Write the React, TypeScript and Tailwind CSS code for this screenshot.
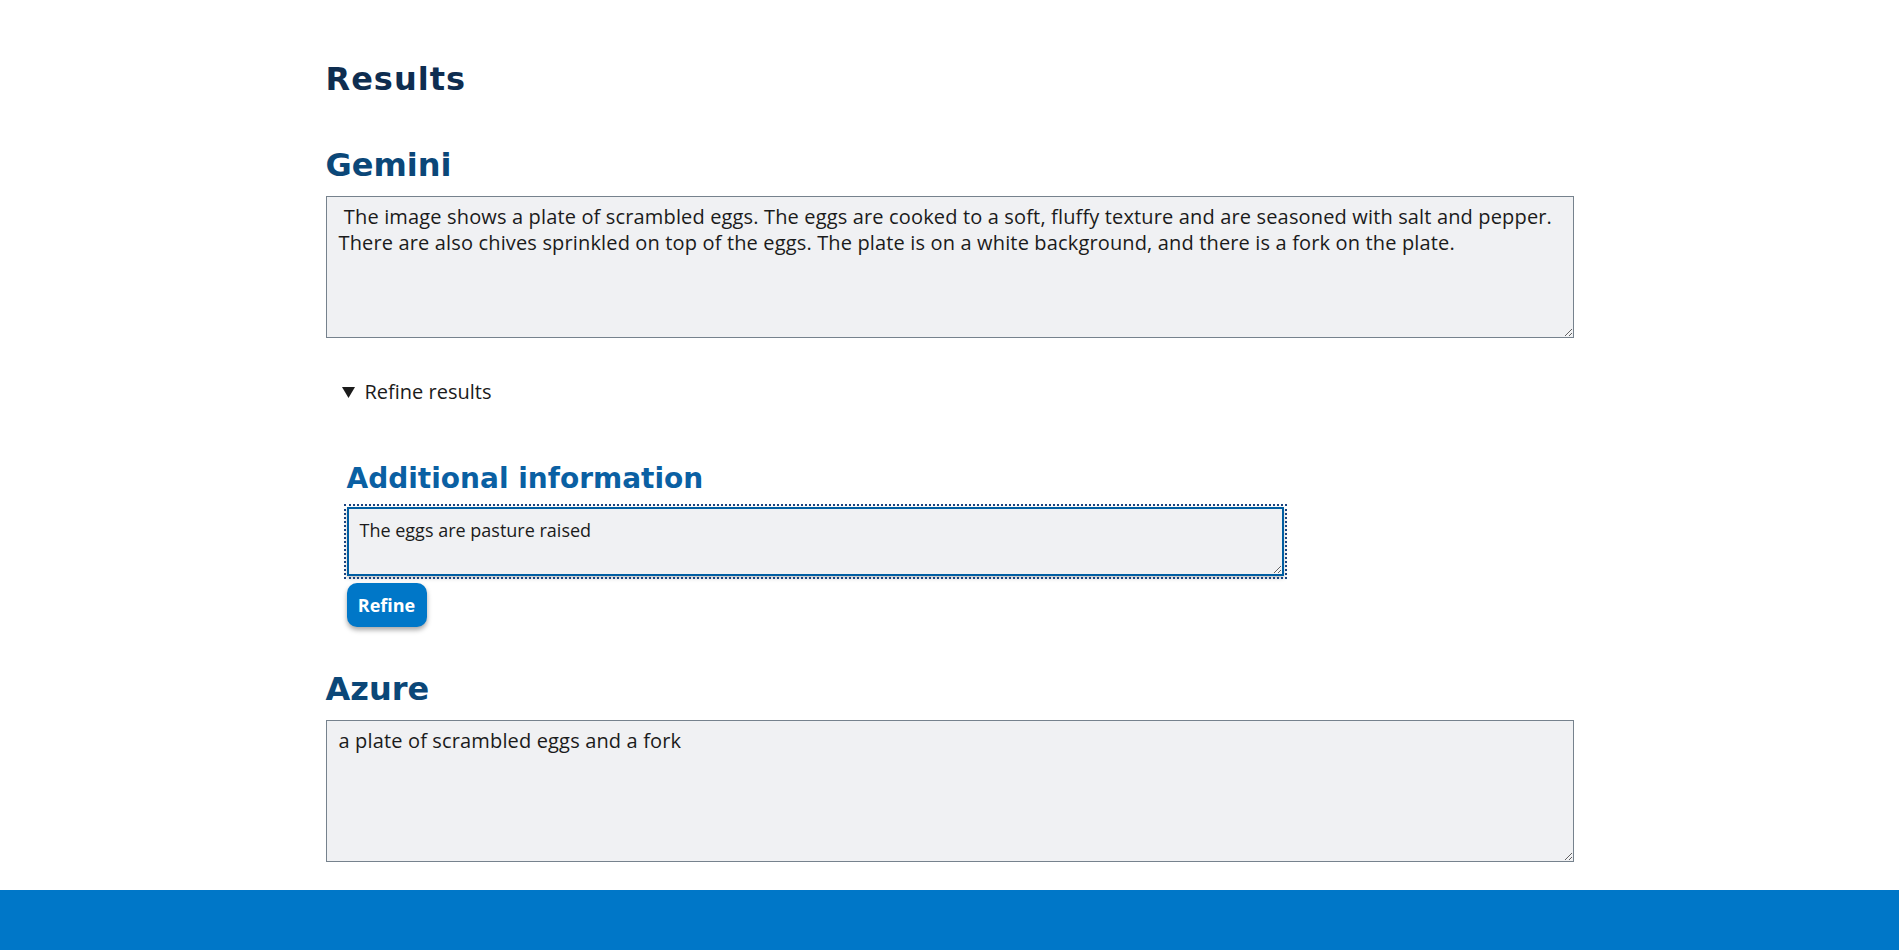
import { useEffect, useRef } from "react";

const ResultBox: React.FC<{ text: string }> = ({ text }) => (
  <textarea
    readOnly
    defaultValue={text}
    className="block w-full h-[142px] mt-[11px] pl-3 pr-2 py-[7px] bg-[#f0f1f3] border border-[#76828d] font-['Open_Sans',sans-serif] text-[20px] tracking-[0.15px] leading-[26px] text-[#1b1b1b] resize-y outline-none"
  />
);

const App: React.FC = () => {
  const infoRef = useRef<HTMLTextAreaElement>(null);

  useEffect(() => {
    const el = infoRef.current;
    if (el) {
      el.focus();
      el.setSelectionRange(el.value.length, el.value.length);
    }
  }, []);

  return (
    <div className="min-h-[950px] flex flex-col bg-white">
      <main className="w-[1248px] mx-auto pt-[59px]">
        <h1 className="font-['DejaVu_Sans',sans-serif] text-[32px] leading-[40px] tracking-[1px] font-bold text-[#0e2d50]">
          Results
        </h1>

        {/* Gemini */}
        <h2 className="mt-[46px] font-['DejaVu_Sans',sans-serif] text-[32px] leading-[40px] font-bold text-[#0b4778]">
          Gemini
        </h2>
        <ResultBox text=" The image shows a plate of scrambled eggs. The eggs are cooked to a soft, fluffy texture and are seasoned with salt and pepper. There are also chives sprinkled on top of the eggs. The plate is on a white background, and there is a fork on the plate." />

        <details open className="mt-[41px] pl-[16px]">
          <summary className="flex items-center gap-[10px] font-['Open_Sans',sans-serif] text-[20px] leading-[26px] text-[#1b1b1b] cursor-pointer list-none">
            <svg width="13" height="11" viewBox="0 0 13 11" className="shrink-0">
              <path d="M0 0h13L6.5 11z" fill="#1b1b1b" />
            </svg>
            Refine results
          </summary>
          <div className="pl-[5px] mt-[57px]">
            <h3 className="font-['DejaVu_Sans',sans-serif] text-[28px] leading-[34px] font-bold text-[#0a60a3]">
              Additional information
            </h3>
            <textarea
              ref={infoRef}
              defaultValue="The eggs are pasture raised"
              className="block mt-[11px] w-[937px] h-[69px] pl-[11px] pr-2 pt-[9px] pb-1 bg-[#f0f1f3] border-2 border-[#005ea2] outline-2 outline-dotted outline-[#1a4480] outline-offset-[1px] focus:outline-2 focus:outline-dotted focus:outline-[#1a4480] shadow-[0_2px_4px_rgba(0,0,0,0.25)] font-['Open_Sans',sans-serif] text-[18px] leading-[24px] text-[#1b1b1b] caret-[#1b1b1b] resize-y"
            />
            <button className="mt-[7px] w-[80px] h-[44px] rounded-[10px] bg-[#0077c8] text-white font-['Open_Sans',sans-serif] text-[18px] font-bold shadow-[0_3px_5px_rgba(0,0,0,0.35)]">
              Refine
            </button>
          </div>
        </details>

        {/* Azure */}
        <h2 className="mt-[42px] font-['DejaVu_Sans',sans-serif] text-[32px] leading-[40px] font-bold text-[#0b4778]">
          Azure
        </h2>
        <ResultBox text="a plate of scrambled eggs and a fork" />
      </main>

      <footer className="mt-[28px] h-[60px] bg-[#0077c8]" />
    </div>
  );
};

export default App;
